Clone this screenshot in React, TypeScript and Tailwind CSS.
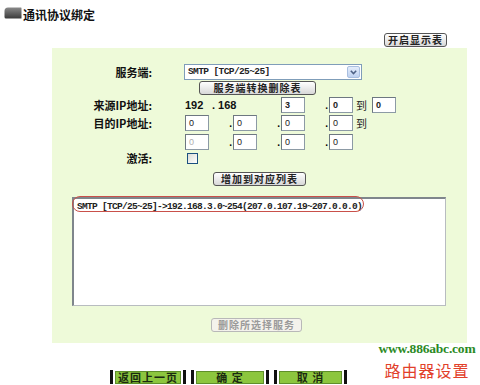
import React from "react";

const CJK = "font-['Noto_Sans_CJK_SC','Noto_Sans',sans-serif]";

function Btn({ children, w, disabled }: { children: React.ReactNode; w: string; disabled?: boolean }) {
  return (
    <div
      className={`${w} h-[14px] flex items-center justify-center rounded-[3px] border ${
        disabled ? "border-[#b8b8b8] text-[#9a9a9a] bg-[#f4f2ec]" : "border-[#555] text-[#222] bg-linear-to-b from-white to-[#d8d8d8]"
      } text-[10px] leading-none font-bold ${CJK} tracking-[1px]`}
    >
      {children}
    </div>
  );
}

function Box({ v, dim }: { v: string; dim?: boolean }) {
  return (
    <div
      className={`w-[24px] h-[16px] border border-[#8c9aa5] border-t-[#6d7780] border-l-[#6d7780] bg-white flex items-center pl-[3px] text-[9px] leading-none font-['Liberation_Sans',sans-serif] ${
        dim ? "text-[#b0b0b0]" : "text-[#222]"
      }`}
    >
      {v}
    </div>
  );
}

function Dot() {
  return <div className="w-[24px] h-[16px] flex items-end justify-end pr-[1px] pb-[2px] text-[10px] leading-none font-bold">.</div>;
}

function Label({ children }: { children: React.ReactNode }) {
  return (
    <div className={`w-[100px] shrink-0 text-right text-[11px] leading-none font-bold text-[#111] ${CJK}`}>{children}</div>
  );
}

function IpRow({ label, vals, dim, tail }: { label?: string; vals: string[]; dim?: boolean; tail?: boolean }) {
  return (
    <div className="flex items-center h-[16px]">
      <Label>{label ?? ""}</Label>
      <div className="ml-[33px] flex items-center">
        <Box v={vals[0]} dim={dim} />
        <Dot />
        <Box v={vals[1]} />
        <Dot />
        <Box v={vals[2]} />
        <Dot />
        <Box v={vals[3]} />
        {tail && (
          <div className={`ml-[3px] text-[11px] leading-none text-[#222] ${CJK}`}>到</div>
        )}
      </div>
    </div>
  );
}

function SideBtn({ children, w }: { children: React.ReactNode; w: string }) {
  return (
    <div className="flex items-center h-[14px]">
      <div className="w-[3px] h-[14px] bg-[#111]" />
      <div
        className={`${w} ml-[2px] mr-[2px] h-[13px] bg-[#8cc63e] border border-[#5f8f2a] flex items-center justify-center text-[11px] leading-none font-bold text-[#1a2a10] ${CJK} tracking-[1px]`}
      >
        {children}
      </div>
      <div className="w-[3px] h-[14px] bg-[#111]" />
    </div>
  );
}

export default function App() {
  return (
    <div className="relative w-[480px] h-[385px] bg-white overflow-hidden font-['Liberation_Sans',sans-serif]">
      {/* header */}
      <div className="flex items-center pt-[6px] pl-[4px] h-[20px]">
        <svg width="18" height="12" viewBox="0 0 18 12">
          <defs>
            <linearGradient id="g" x1="0" y1="0" x2="0" y2="1">
              <stop offset="0" stopColor="#8a8a8a" />
              <stop offset="1" stopColor="#3a3a3a" />
            </linearGradient>
          </defs>
          <path d="M4 0.5 H17 Q17.5 0.5 17.5 1.5 V11.5 H2 Q0.5 11.5 0.5 10 V4 Q0.5 0.5 4 0.5Z" fill="url(#g)" />
        </svg>
        <div className={`ml-[1px] mt-[3px] text-[12px] leading-none font-bold text-[#111] ${CJK}`}>通讯协议绑定</div>
      </div>

      {/* top-right button */}
      <div className="flex justify-end pr-[33px] mt-[13px]">
        <Btn w="w-[63px]">开启显示表</Btn>
      </div>

      {/* green panel */}
      <div className="ml-[52px] mt-[1px] w-[415px] h-[295px] bg-[#eefad9] flex flex-col pt-[16px]">
        {/* service */}
        <div className="flex items-center h-[16px]">
          <Label>服务端:</Label>
          <div className="ml-[32px] w-[178px] h-[16px] border border-[#7f9db9] bg-white flex items-center">
            <div className="flex-1 pl-[3px] text-[9.5px] leading-none tracking-[-0.6px] font-bold text-[#222] font-['Liberation_Mono',monospace]">
              SMTP [TCP/25~25]
            </div>
            <div className="w-[13px] h-[12px] mr-[1px] rounded-[2px] border border-[#a9bfe0] bg-linear-to-b from-[#e4edfb] to-[#bfd2f0] flex items-center justify-center">
              <svg width="7" height="5" viewBox="0 0 7 5">
                <path d="M0.8 0.8 L3.5 3.6 L6.2 0.8" fill="none" stroke="#4d6185" strokeWidth="1.5" />
              </svg>
            </div>
          </div>
        </div>
        <div className="ml-[147px] mt-[1px]">
          <Btn w="w-[117px]">服务端转换删除表</Btn>
        </div>

        {/* source IP */}
        <div className="flex items-center h-[16px] mt-[2px]">
          <Label>来源IP地址:</Label>
          <div className="ml-[33px] flex items-center text-[11px] leading-none font-bold text-[#111]">
            <div className="w-[27px]">192</div>
            <div className="w-[69px]">. 168</div>
            <Box v="3" />
            <Dot />
            <Box v="0" />
            <div className={`ml-[3px] text-[11px] leading-none font-normal text-[#222] ${CJK}`}>到</div>
            <div className="ml-[5px]">
              <Box v="0" />
            </div>
          </div>
        </div>
        <div className="mt-[2px]">
          <IpRow label="目的IP地址:" vals={["0", "0", "0", "0"]} tail />
        </div>
        <div className="mt-[3px]">
          <IpRow vals={["0", "0", "0", "0"]} dim />
        </div>

        {/* active */}
        <div className="flex items-center h-[12px] mt-[2px]">
          <Label>激活:</Label>
          <div className="ml-[35px] w-[11px] h-[11px] border border-[#1c5180] bg-linear-to-br from-[#dcdcd6] to-white" />
        </div>

        <div className="ml-[161px] mt-[8px]">
          <Btn w="w-[93px]">增加到对应列表</Btn>
        </div>

        {/* list box */}
        <div className="relative ml-[20px] mt-[11px] w-[374px] h-[109px] bg-white border border-[#b8bcc0] border-t-[#7f868c] border-l-[#7f868c] border-t-[2px] border-l-[2px]">
          <div className="pl-[3px] pt-[2px] text-[9.5px] leading-[11px] tracking-[-0.7px] font-bold text-[#222] font-['Liberation_Mono',monospace] whitespace-nowrap">
            SMTP [TCP/25~25]-&gt;192.168.3.0~254(207.0.107.19~207.0.0.0)
          </div>
          <div className="absolute left-[-2px] top-[-3px] w-[292px] h-[16px] rounded-full border-[1.5px] border-[#c9504a]" />
        </div>

        <div className="ml-[159px] mt-[12px]">
          <Btn w="w-[91px]" disabled>
            删除所选择服务
          </Btn>
        </div>
      </div>

      {/* bottom buttons */}
      <div className="flex items-center ml-[110px] mt-[27px] gap-[5px]">
        <SideBtn w="w-[66px]">返回上一页</SideBtn>
        <SideBtn w="w-[68px]">确 定</SideBtn>
        <SideBtn w="w-[63px]">取 消</SideBtn>
      </div>

      {/* watermark */}
      <div className="absolute left-[376px] top-[341px] w-[102px] flex flex-col items-center">
        <div className="text-[13.5px] leading-[16px] font-bold text-[#2a8a24] font-['Liberation_Serif',serif] tracking-[-0.2px] whitespace-nowrap">
          www.886abc.com
        </div>
        <div className={`mt-[4px] text-[16px] leading-[18px] text-[#e2402a] ${CJK} tracking-[1px]`}>路由器设置</div>
      </div>
    </div>
  );
}
